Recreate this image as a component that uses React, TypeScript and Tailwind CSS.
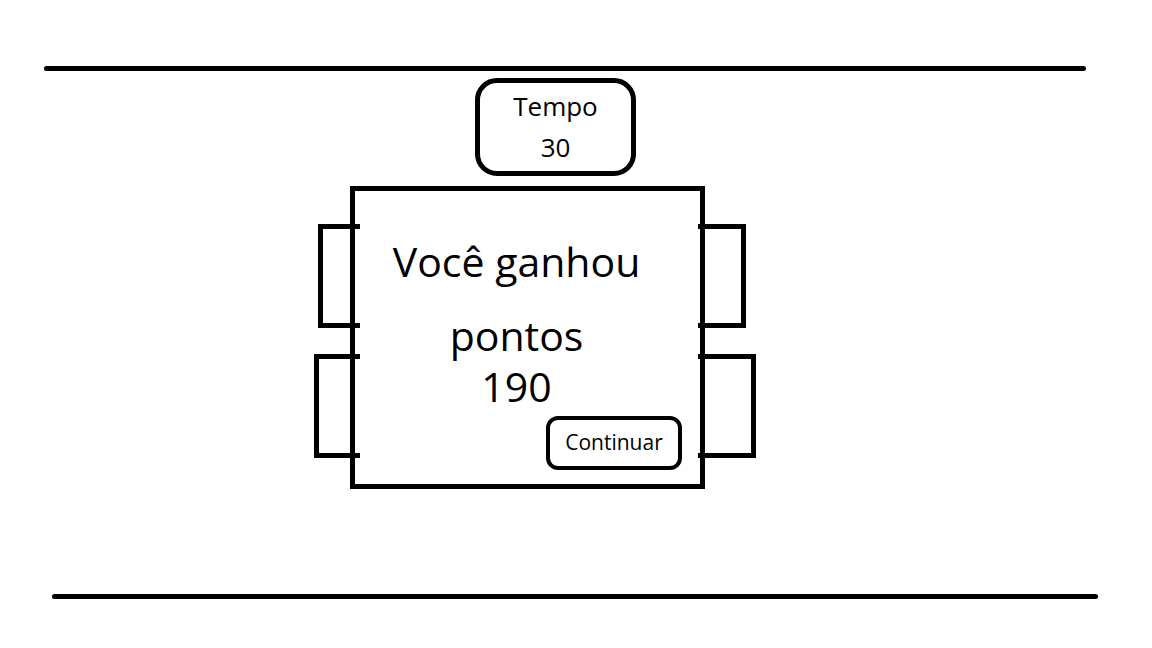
import React from 'react';

const font = { fontFamily: '"Open Sans", Lato, sans-serif' };

export default function App() {
  return (
    <div className="w-[1152px] h-[648px] bg-white text-black flex flex-col" style={font}>
      {/* Top line */}
      <div className="ml-[44px] mt-[66px] w-[1042px] h-[5px] bg-black rounded-full" />

      {/* Timer */}
      <div className="ml-[475px] mt-[7px] w-[161px] h-[98px] border-[5px] border-black rounded-[22px] flex flex-col items-center pt-[8px] text-[26px]">
        <span className="leading-[30px]">Tempo</span>
        <span className="leading-[30px] mt-[11px]">30</span>
      </div>

      {/* Table with chairs */}
      <div className="ml-[314px] mt-[10px] flex items-start">
        <div className="w-[46px] mt-[38px] flex flex-col items-end">
          <div className="w-[42px] h-[104px] border-[5px] border-r-0 border-black" />
          <div className="w-[46px] h-[104px] mt-[26px] border-[5px] border-r-0 border-black" />
        </div>

        <div className="-ml-[10px] w-[355px] h-[303px] border-[5px] border-black flex flex-col">
          <div className="flex flex-col items-center pr-[22px] pt-[46px] text-[41px]">
            <span className="leading-[48px]">Você ganhou</span>
            <span className="leading-[48px] mt-[26px]">pontos</span>
            <span className="leading-[48px] mt-[3px]">190</span>
          </div>
          <div className="flex-1" />
          <button className="self-end mr-[18px] mb-[14px] w-[136px] h-[54px] border-[4px] border-black rounded-[12px] text-[21px] flex items-center justify-center">
            Continuar
          </button>
        </div>

        <div className="-ml-[7px] mt-[38px] flex flex-col items-start">
          <div className="w-[48px] h-[104px] border-[5px] border-l-0 border-black" />
          <div className="w-[58px] h-[104px] mt-[26px] border-[5px] border-l-0 border-black" />
        </div>
      </div>

      {/* Bottom line */}
      <div className="ml-[52px] mt-[105px] w-[1046px] h-[5px] bg-black rounded-full" />
    </div>
  );
}
